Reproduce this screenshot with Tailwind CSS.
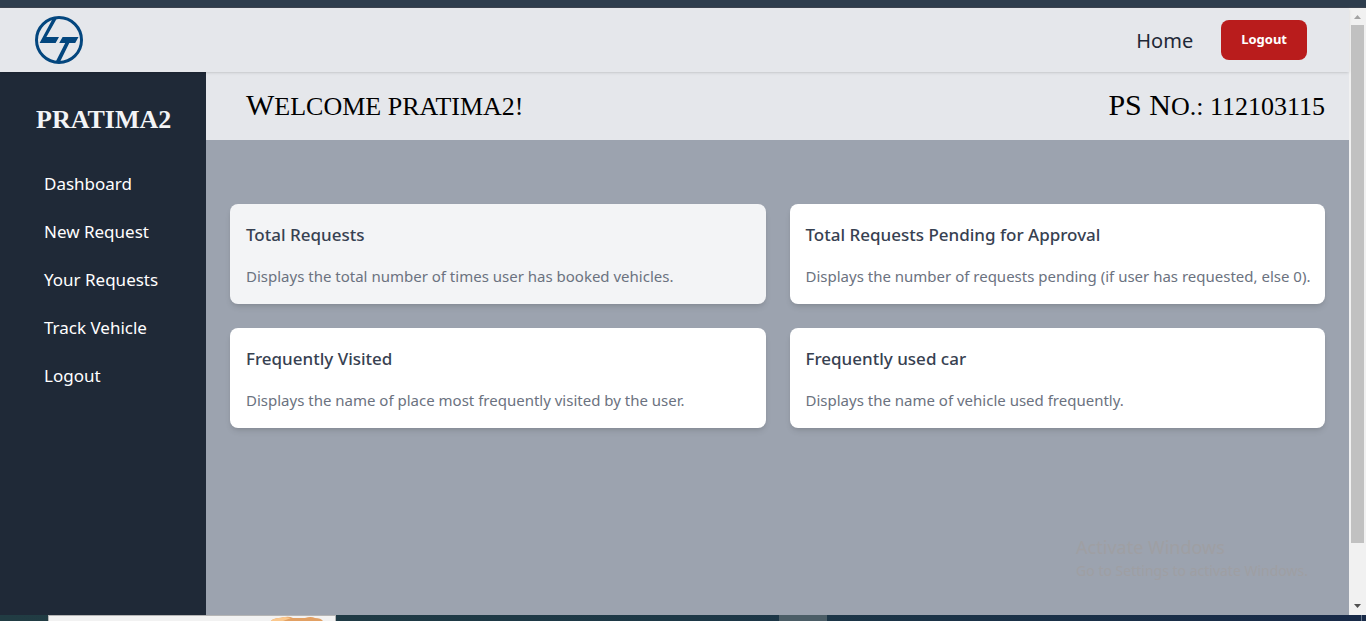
<!DOCTYPE html>
<html lang="en">
<head>
<meta charset="utf-8">
<meta name="viewport" content="width=device-width, initial-scale=1">
<title>Dashboard</title>
<script src="https://cdn.jsdelivr.net/npm/@tailwindcss/browser@4"></script>
</head>
<body class="flex h-screen flex-col overflow-hidden bg-[#9ca3af] font-['Noto_Sans','Open_Sans',sans-serif]">
  <div class="h-2 shrink-0 border-b border-[#3c4450] bg-[#2e3d4d]"></div>

  <div class="flex min-h-0 flex-1">
    <div class="flex min-w-0 flex-1 flex-col">
      <header class="relative z-10 flex h-16 shrink-0 items-center justify-between bg-[#e5e7eb] pr-[42px] pl-[35px] shadow">
        <a href="#" aria-label="L&amp;T home">
          <svg class="size-12" viewBox="0 0 48 48" fill="#03467e" aria-hidden="true">
            <circle cx="24" cy="24" r="22.500" fill="none" stroke="#03467e" stroke-width="3"/>
            <path d="M17.500 3H21.500L11.400 21H24L20.600 27H4.600Z"/>
            <path d="M27.600 21H43.500L40.200 27H34.300L25.200 45.500H20.800L30.200 27H24.200Z"/>
          </svg>
        </a>
        <nav class="flex items-center gap-7">
          <a href="#" class="pt-0.5 text-xl text-[#1f2937]">Home</a>
          <button type="button" class="h-10 rounded-lg bg-[#b91c1c] px-5 text-[13px] font-bold text-white">Logout</button>
        </nav>
      </header>

      <div class="flex min-h-0 flex-1">
        <aside class="w-[206px] shrink-0 bg-[#1f2937] pt-8 text-white">
          <h2 class="pl-9 font-['Liberation_Serif',serif] text-[26px] leading-8 font-bold text-[#f3f4f6]">PRATIMA2</h2>
          <nav class="mt-6 flex flex-col pl-11 text-[17px] leading-[48px]">
            <a href="#">Dashboard</a>
            <a href="#">New Request</a>
            <a href="#">Your Requests</a>
            <a href="#">Track Vehicle</a>
            <a href="#">Logout</a>
          </nav>
        </aside>

        <main class="min-w-0 flex-1">
          <div class="flex h-[68px] items-center justify-between bg-[#e5e7eb] pr-6 pl-10 font-['Liberation_Serif',serif] text-[26px] text-black uppercase">
            <h1><span class="text-3xl">W</span>elcome pratima2!</h1>
            <p><span class="text-3xl">PS N</span>o.: 112103115</p>
          </div>
          <div class="grid grid-cols-2 gap-6 px-6 pt-16">
            <section class="rounded-lg bg-[#f3f4f6] p-4 shadow-md">
              <h3 class="text-[17px] leading-[30px] font-medium text-[#374151]">Total Requests</h3>
              <p class="mt-3.5 text-[15px] leading-6 whitespace-nowrap text-[#6b7280]">Displays the total number of times user has booked vehicles.</p>
            </section>
            <section class="rounded-lg bg-white p-4 shadow-md">
              <h3 class="text-[17px] leading-[30px] font-medium text-[#374151]">Total Requests Pending for Approval</h3>
              <p class="mt-3.5 text-[15px] leading-6 whitespace-nowrap text-[#6b7280]">Displays the number of requests pending (if user has requested, else 0).</p>
            </section>
            <section class="rounded-lg bg-white p-4 shadow-md">
              <h3 class="text-[17px] leading-[30px] font-medium text-[#374151]">Frequently Visited</h3>
              <p class="mt-3.5 text-[15px] leading-6 whitespace-nowrap text-[#6b7280]">Displays the name of place most frequently visited by the user.</p>
            </section>
            <section class="rounded-lg bg-white p-4 shadow-md">
              <h3 class="text-[17px] leading-[30px] font-medium text-[#374151]">Frequently used car</h3>
              <p class="mt-3.5 text-[15px] leading-6 whitespace-nowrap text-[#6b7280]">Displays the name of vehicle used frequently.</p>
            </section>
          </div>
        </main>
      </div>
    </div>

    <div class="flex w-[17px] shrink-0 flex-col items-center bg-[#f1f1f1]" aria-hidden="true">
      <svg class="h-[17px] w-[17px] shrink-0" viewBox="0 0 17 17" fill="#a3a3a3"><path d="M5 11h7L8.500 7Z"/></svg>
      <div class="h-[518px] w-[13px] bg-[#c1c1c1]"></div>
      <svg class="mt-auto h-[17px] w-[17px] shrink-0" viewBox="0 0 17 17" fill="#505050"><path d="M5 6h7l-3.500 4Z"/></svg>
    </div>
  </div>

  <div class="flex h-1.5 shrink-0 bg-linear-to-r from-[#213c43] via-[#1d3846] to-[#182a48]" aria-hidden="true">
    <div class="ml-12 flex w-72 justify-end border border-b-0 border-[#b5b5b5] bg-[#f2f2f2]">
      <svg class="mr-3 h-[5px] w-[52px]" viewBox="0 0 52 5"><path d="M0 5C2 2 9 2 14 1Q18 0 22 2H34Q40 0 44 2Q50 2 52 5Z" fill="#e2a063"/><path d="M0 5C2 2 9 2 14 1L20 2 12 5Z" fill="#fbc88d"/></svg>
    </div>
    <div class="ml-[443px] w-12 bg-[#4b5d66]"></div>
    <div class="mr-1 ml-auto w-px bg-[#66758a]"></div>
  </div>

  <div class="pointer-events-none absolute right-[58px] bottom-[38px] text-[#9f9fa3]">
    <p class="text-lg leading-6">Activate Windows</p>
    <p class="text-sm leading-6">Go to Settings to activate Windows.</p>
  </div>
</body>
</html>
